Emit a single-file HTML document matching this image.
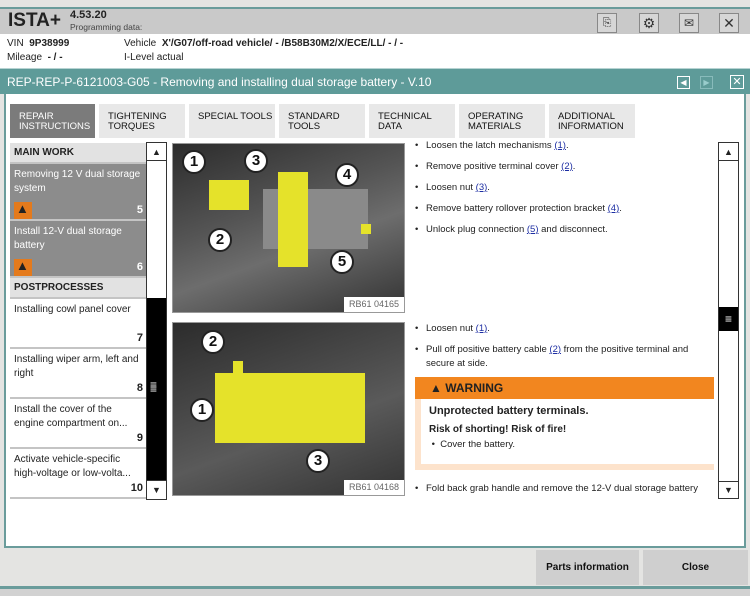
<!DOCTYPE html>
<html><head><meta charset="utf-8"><style>
*{box-sizing:border-box;margin:0;padding:0}
body{width:750px;height:596px;overflow:hidden;background:#e4e4e2;font-family:"Liberation Sans",Arial,sans-serif;position:relative;font-size:11px;color:#222}
.abs{position:absolute}
.hdr{left:0;top:7px;width:750px;height:27px;background:#c9c9c9;border-top:2px solid #6a9c9b}
.ib{position:absolute;top:4px;width:20px;height:20px;border:1px solid #888;background:#d6d6d6;font-size:14px;text-align:center;line-height:18px;color:#333}
.info{left:0;top:34px;width:750px;height:34px;background:#fff}
.teal{left:0;top:68px;width:750px;height:26px;background:#5e9b99;border-top:1px solid #b7d3d2;color:#fff;font-size:12px;line-height:26px;padding-left:7px}
.frame{left:4px;top:94px;width:742px;height:454px;background:#fff;border:2px solid #6a9c9b;border-top:none}
.tab{position:absolute;top:104px;height:34px;background:#e8e8e8;font-size:9.5px;line-height:10px;padding:8px 0 0 9px;color:#111}
.li{position:absolute;left:10px;width:136px;border-bottom:2px solid #c4c4c4;font-size:10px;line-height:14px;padding:4px}
.num{position:absolute;right:3px;bottom:2px;font-size:11px;font-weight:bold}
.warn{width:18px;height:17px;background:#e47a1c;position:relative;margin-top:6px}
.warn:after{content:"▲";position:absolute;left:2px;top:0px;font-size:13px;color:#222}
.sb{position:absolute;background:#fff;border:1px solid #333}
.img{position:absolute;background:#3a3a3a;border:1px solid #999;overflow:hidden}
.c{position:absolute;width:24px;height:24px;border-radius:50%;background:#fff;border:2px solid #222;font-weight:bold;font-size:15px;text-align:center;line-height:20px;color:#111}
.y{position:absolute;background:#e5e22a}
.lbl{position:absolute;right:0;bottom:0;width:60px;height:15px;background:#fff;font-size:9px;color:#666;text-align:center;line-height:15px}
.t{position:absolute;left:415px;font-size:9.5px;line-height:14px;color:#222}
.t:before{content:"•";position:absolute;left:0}
.t span{padding-left:11px;display:block}
a{color:#1d2ea3;text-decoration:underline}
.btn{position:absolute;top:550px;height:35px;background:#cfcfcf;font-size:10px;font-weight:bold;text-align:center;line-height:35px;color:#111}
</style></head><body>
<div class="abs hdr">
 <div class="abs" style="left:8px;top:0;font-size:19px;font-weight:bold;color:#222;line-height:24px">ISTA+</div>
 <div class="abs" style="left:70px;top:0px;font-size:11px;font-weight:bold">4.53.20</div>
 <div class="abs" style="left:70px;top:13px;font-size:8.5px;color:#444">Programming data:</div>
 <div class="ib" style="left:597px;font-size:11px">⎘</div>
 <div class="ib" style="left:639px">⚙</div>
 <div class="ib" style="left:679px;font-size:12px">✉</div>
 <div class="ib" style="left:719px">✕</div>
</div>
<div class="abs info">
 <div class="abs" style="left:7px;top:4px;font-size:10px">VIN &nbsp;<b>9P38999</b></div>
 <div class="abs" style="left:124px;top:4px;font-size:10px">Vehicle &nbsp;<b>X'/G07/off-road vehicle/ - /B58B30M2/X/ECE/LL/ - / -</b></div>
 <div class="abs" style="left:7px;top:18px;font-size:10px">Mileage &nbsp;<b>- / -</b></div>
 <div class="abs" style="left:124px;top:18px;font-size:10px">I-Level actual</div>
</div>
<div class="abs teal">REP-REP-P-6121003-G05 - Removing and installing dual storage battery - V.10
 <div class="abs" style="left:677px;top:7px;width:13px;height:13px;border:1px solid #fff;font-size:8px;line-height:11px;text-align:center">◀</div>
 <div class="abs" style="left:700px;top:7px;width:13px;height:13px;border:1px solid #8bb;font-size:8px;line-height:11px;text-align:center;color:#9cc">▶</div>
 <div class="abs" style="left:730px;top:6px;width:14px;height:14px;border:1px solid #fff;font-size:11px;line-height:12px;text-align:center">✕</div>
</div>
<div class="abs frame"></div>
<div class="tab" style="left:10px;width:85px;background:#7b7b7b;color:#fff">REPAIR<br>INSTRUCTIONS</div>
<div class="tab" style="left:99px;width:86px">TIGHTENING<br>TORQUES</div>
<div class="tab" style="left:189px;width:86px">SPECIAL TOOLS</div>
<div class="tab" style="left:279px;width:86px">STANDARD<br>TOOLS</div>
<div class="tab" style="left:369px;width:86px">TECHNICAL<br>DATA</div>
<div class="tab" style="left:459px;width:86px">OPERATING<br>MATERIALS</div>
<div class="tab" style="left:549px;width:86px">ADDITIONAL<br>INFORMATION</div>

<div class="li" style="top:143px;height:21px;background:#e2e2e2;font-weight:bold;font-size:10px;padding-top:3px">MAIN WORK</div>
<div class="li" style="top:164px;height:57px;background:#8c8c8c;color:#fff">Removing 12 V dual storage system<div class="warn"></div><div class="num">5</div></div>
<div class="li" style="top:221px;height:57px;background:#8c8c8c;color:#fff">Install 12-V dual storage battery<div class="warn"></div><div class="num" style="color:#fff">6</div></div>
<div class="li" style="top:278px;height:21px;background:#e2e2e2;font-weight:bold;font-size:10px;padding-top:3px">POSTPROCESSES</div>
<div class="li" style="top:299px;height:50px;background:#fff">Installing cowl panel cover<div class="num">7</div></div>
<div class="li" style="top:349px;height:50px;background:#fff">Installing wiper arm, left and right<div class="num">8</div></div>
<div class="li" style="top:399px;height:50px;background:#fff">Install the cover of the engine compartment on...<div class="num">9</div></div>
<div class="li" style="top:449px;height:50px;background:#fff">Activate vehicle-specific high-voltage or low-volta...<div class="num">10</div></div>
<div class="sb" style="left:146px;top:142px;width:21px;height:358px"></div>
<div class="abs" style="left:147px;top:298px;width:19px;height:182px;background:#000"></div>
<div class="abs" style="left:147px;top:143px;width:19px;height:18px;border-bottom:1px solid #333;font-size:9px;text-align:center;line-height:18px">▲</div>
<div class="abs" style="left:147px;top:480px;width:19px;height:19px;border-top:1px solid #333;font-size:9px;text-align:center;line-height:19px;background:#fff">▼</div>
<div class="abs" style="left:150px;top:383px;color:#fff;font-size:12px;line-height:4px">≡<br>≡</div>

<div class="img" style="left:172px;top:143px;width:233px;height:170px;background:linear-gradient(160deg,#2c2c2c,#555 40%,#6d6d6d 60%,#333)">
 <div class="abs" style="left:90px;top:45px;width:105px;height:60px;background:#8a8a8a"></div>
 <div class="y" style="left:36px;top:36px;width:40px;height:30px"></div>
 <div class="y" style="left:105px;top:28px;width:30px;height:95px"></div>
 <div class="y" style="left:188px;top:80px;width:10px;height:10px"></div>
 <div class="c" style="left:9px;top:6px">1</div><div class="c" style="left:71px;top:5px">3</div>
 <div class="c" style="left:162px;top:19px">4</div><div class="c" style="left:35px;top:84px">2</div>
 <div class="c" style="left:157px;top:106px">5</div>
 <div class="lbl">RB61 04165</div>
</div>
<div class="img" style="left:172px;top:322px;width:233px;height:174px;background:linear-gradient(160deg,#2c2c2c,#4a4a4a 40%,#5a5a5a 60%,#333)">
 <div class="y" style="left:42px;top:50px;width:150px;height:70px"></div>
 <div class="y" style="left:60px;top:38px;width:10px;height:20px"></div>
 <div class="c" style="left:28px;top:7px">2</div><div class="c" style="left:17px;top:75px">1</div>
 <div class="c" style="left:133px;top:126px">3</div>
 <div class="lbl">RB61 04168</div>
</div>

<div class="t" style="top:139px"><span>Loosen the latch mechanisms <a>(1)</a>.</span></div>
<div class="t" style="top:160px"><span>Remove positive terminal cover <a>(2)</a>.</span></div>
<div class="t" style="top:181px"><span>Loosen nut <a>(3)</a>.</span></div>
<div class="t" style="top:202px"><span>Remove battery rollover protection bracket <a>(4)</a>.</span></div>
<div class="t" style="top:223px"><span>Unlock plug connection <a>(5)</a> and disconnect.</span></div>
<div class="t" style="top:322px"><span>Loosen nut <a>(1)</a>.</span></div>
<div class="t" style="top:343px;width:300px"><span>Pull off positive battery cable <a>(2)</a> from the positive terminal and secure at side.</span></div>
<div class="abs" style="left:415px;top:377px;width:299px;height:93px;background:#fde3cc">
 <div style="height:22px;background:#f2861f;font-weight:bold;font-size:12px;line-height:22px;padding-left:15px;color:#222">▲ WARNING</div>
 <div style="position:absolute;left:6px;top:22px;right:0;bottom:6px;background:#fff;padding:6px 8px;font-size:10px">
  <div style="font-weight:bold;font-size:11px">Unprotected battery terminals.</div>
  <div style="font-weight:bold;margin-top:7px">Risk of shorting! Risk of fire!</div>
  <div style="margin-top:4px;font-size:9.5px">&nbsp;•&nbsp; Cover the battery.</div>
 </div>
</div>
<div class="t" style="top:482px"><span>Fold back grab handle and remove the 12-V dual storage battery</span></div>
<div class="sb" style="left:718px;top:142px;width:21px;height:357px"></div>
<div class="abs" style="left:719px;top:143px;width:19px;height:18px;border-bottom:1px solid #333;font-size:9px;text-align:center;line-height:18px">▲</div>
<div class="abs" style="left:719px;top:307px;width:19px;height:24px;background:#000;color:#fff;font-size:12px;text-align:center;line-height:24px">≡</div>
<div class="abs" style="left:719px;top:481px;width:19px;height:17px;border-top:1px solid #333;font-size:9px;text-align:center;line-height:17px">▼</div>

<div class="btn" style="left:536px;width:103px">Parts information</div>
<div class="btn" style="left:643px;width:105px">Close</div>
<div class="abs" style="left:0;top:586px;width:750px;height:3px;background:#6a9c9b"></div>
<div class="abs" style="left:0;top:589px;width:750px;height:7px;background:#d2d2d2"></div>
</body></html>
